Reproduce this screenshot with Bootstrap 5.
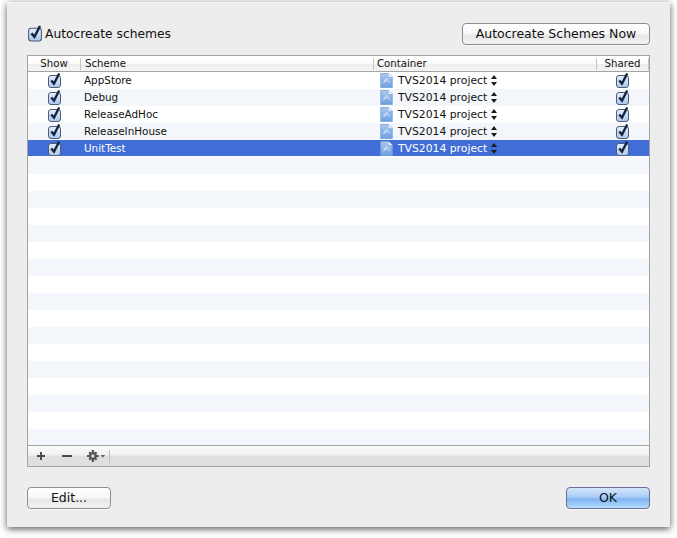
<!DOCTYPE html>
<html lang="en"><head><meta charset="utf-8"><title>Manage Schemes</title>
<link rel="stylesheet" href="https://cdn.jsdelivr.net/npm/bootstrap@5.3.0/dist/css/bootstrap.min.css">
<style>
html,body{height:100%;background:#fff;overflow:hidden}
body{font-family:"DejaVu Sans","Liberation Sans",sans-serif;color:#111;padding:2px 7px 0}
.sheet{width:663px;height:525px;background:#ededed;box-shadow:0 2px 7px rgba(0,0,0,.65),inset 0 1px 0 #f6f6f6;padding:21px 20px 19px 20px}
.mac-btn{font-size:12.5px;line-height:1;color:#111;height:22px;padding:0;border:1px solid #8e8e8e;border-radius:4px;background:linear-gradient(#fff,#f7f7f7 50%,#e6e6e6 55%,#f2f2f2);box-shadow:0 1px 0 rgba(255,255,255,.6)}
.btn-auto{width:188px}
.btn-edit{width:84px}
.btn-ok{width:84px;border-color:#6a6f98;background:linear-gradient(#d5e6fb,#a9cdf6 45%,#80b5f3 55%,#a5d2fb 90%,#c2e4fd)}
.auto-label{font-size:12.3px;gap:2px;line-height:16px}
.ck{width:15px;height:16px;flex:none;display:block;margin-top:-2px}
.ck-lg{width:16px;height:18px;margin-top:-3px}
.tbl{width:623px;height:412px;margin-top:10px;border:1px solid #a3a3a3;background:#fff;font-size:10.4px}
.cols{display:grid;grid-template-columns:52px 293px 223px 53px;align-items:center}
.thead{height:16px;border-bottom:1px solid #a3a3a3;background:linear-gradient(#fff,#fcfcfc 50%,#eee 55%,#f4f4f4);font-size:10.2px;line-height:15px}
.thead>div{border-left:1px solid #c5c5c5;padding-left:3px;height:12px;line-height:12px}
.thead>div:first-child{border-left:0;text-align:center;padding-left:0}
.thead>div:nth-child(2){padding-left:4px}
.thead>div:last-child{text-align:center;padding-left:0;border-right:1px solid #c5c5c5}
.tbody{height:373px;overflow:hidden;background:repeating-linear-gradient(#fff 0 17px,#f3f6fa 17px 34px)}
.trow{height:17px}
.trow.sel{height:16px;background:#406dd6;color:#fff}
.cell-c{display:flex;justify-content:center;align-items:center}
.cell-s{padding-left:4px;line-height:16px;margin-top:-1px}
.cell-p{display:flex;align-items:center;padding-left:7px;gap:5px;line-height:16px;font-size:10.8px}
.pname{margin-top:1px}
.doc{width:13px;height:15px;flex:none;margin-top:-1px}
.updn{width:6px;height:11px;flex:none;margin-left:-1px}
.tfoot{height:21px;border-top:1px solid #a3a3a3;background:linear-gradient(#fbfbfb,#f0f0f0 46%,#dfdfdf 50%,#dfdfdf);padding-left:8px}
.tool{display:block;flex:none}
.tsep{width:1px;height:13px;background:#bdbdbd;margin-left:3px}
.foot{margin-top:20px}
</style></head>
<body>
<svg width="0" height="0" class="position-absolute">
<defs>
<linearGradient id="cg" x1="0" y1="0" x2="0" y2="1"><stop offset="0" stop-color="#e6effc"/><stop offset=".5" stop-color="#c6daf6"/><stop offset="1" stop-color="#a9c9f2"/></linearGradient>
<linearGradient id="dg" x1="0" y1="0" x2="0" y2="1"><stop offset="0" stop-color="#a9c8ef"/><stop offset="1" stop-color="#6f9fdf"/></linearGradient>
<symbol id="ck" viewBox="0 0 15 16"><rect x="1.500" y="3.500" width="12" height="12" rx="2.500" fill="url(#cg)" stroke="#4f5b74"/><path d="M4.200 8.400 7 11.600 12.200 1.400" fill="none" stroke="#16233a" stroke-width="2.300"/></symbol>
<symbol id="doc" viewBox="0 0 14 17"><path d="M.5.5H9.500L13.500 4.500V16.500H.5Z" fill="url(#dg)" stroke="#7ca3d6"/><path d="M9.500.5V4.500H13.500Z" fill="#e6effa"/><path d="M3.500 11 7 6l3.500 5M5 10.800 7 8" fill="none" stroke="#e4eefb" stroke-width="1"/></symbol>
<symbol id="ud" viewBox="0 0 6 11"><path d="M3 0 6 4H0ZM3 11 0 7H6Z" fill="#1c1c1c"/></symbol>
</defs>
</svg>
<div class="sheet d-flex flex-column">
  <div class="d-flex justify-content-between align-items-center">
    <label class="auto-label d-flex align-items-center"><svg class="ck ck-lg"><use href="#ck"/></svg>Autocreate schemes</label>
    <button type="button" class="btn mac-btn btn-auto me-0">Autocreate Schemes Now</button>
  </div>
  <div class="tbl">
    <div class="cols thead"><div>Show</div><div>Scheme</div><div>Container</div><div>Shared</div></div>
    <div class="tbody">
      <div class="cols trow"><div class="cell-c"><svg class="ck"><use href="#ck"/></svg></div><div class="cell-s">AppStore</div><div class="cell-p"><svg class="doc"><use href="#doc"/></svg><span class="pname">TVS2014 project</span><svg class="updn"><use href="#ud"/></svg></div><div class="cell-c"><svg class="ck"><use href="#ck"/></svg></div></div>
      <div class="cols trow"><div class="cell-c"><svg class="ck"><use href="#ck"/></svg></div><div class="cell-s">Debug</div><div class="cell-p"><svg class="doc"><use href="#doc"/></svg><span class="pname">TVS2014 project</span><svg class="updn"><use href="#ud"/></svg></div><div class="cell-c"><svg class="ck"><use href="#ck"/></svg></div></div>
      <div class="cols trow"><div class="cell-c"><svg class="ck"><use href="#ck"/></svg></div><div class="cell-s">ReleaseAdHoc</div><div class="cell-p"><svg class="doc"><use href="#doc"/></svg><span class="pname">TVS2014 project</span><svg class="updn"><use href="#ud"/></svg></div><div class="cell-c"><svg class="ck"><use href="#ck"/></svg></div></div>
      <div class="cols trow"><div class="cell-c"><svg class="ck"><use href="#ck"/></svg></div><div class="cell-s">ReleaseInHouse</div><div class="cell-p"><svg class="doc"><use href="#doc"/></svg><span class="pname">TVS2014 project</span><svg class="updn"><use href="#ud"/></svg></div><div class="cell-c"><svg class="ck"><use href="#ck"/></svg></div></div>
      <div class="cols trow sel"><div class="cell-c"><svg class="ck"><use href="#ck"/></svg></div><div class="cell-s">UnitTest</div><div class="cell-p"><svg class="doc"><use href="#doc"/></svg><span class="pname">TVS2014 project</span><svg class="updn"><use href="#ud"/></svg></div><div class="cell-c"><svg class="ck"><use href="#ck"/></svg></div></div>
    </div>
    <div class="tfoot d-flex align-items-center">
      <svg class="tool" width="10" height="10" viewBox="0 0 10 10"><path d="M4 1h2v3h3v2H6v3H4V6H1V4h3Z" fill="#4a4a4a"/></svg>
      <svg class="tool" style="margin-left:16px" width="10" height="10" viewBox="0 0 10 10"><path d="M0 4h10v2H0Z" fill="#4a4a4a"/></svg>
      <svg class="tool" style="margin-left:15px" width="19" height="12" viewBox="0 0 21 13"><g fill="#555"><circle cx="6.500" cy="6.500" r="4.200"/><path d="M5.300 0h2.400v13H5.300ZM0 5.300h13v2.400H0ZM1.600 3.300 3.300 1.600l8.100 8.100-1.700 1.700ZM9.700 1.600l1.700 1.700-8.100 8.100-1.700-1.700Z"/></g><circle cx="6.500" cy="6.500" r="1.800" fill="#ddd"/><path d="M15 5.500h5l-2.500 3Z" fill="#666"/></svg>
      <div class="tsep"></div>
    </div>
  </div>
  <div class="foot d-flex justify-content-between">
    <button type="button" class="btn mac-btn btn-edit">Edit...</button>
    <button type="button" class="btn mac-btn btn-ok">OK</button>
  </div>
</div>
</body></html>
